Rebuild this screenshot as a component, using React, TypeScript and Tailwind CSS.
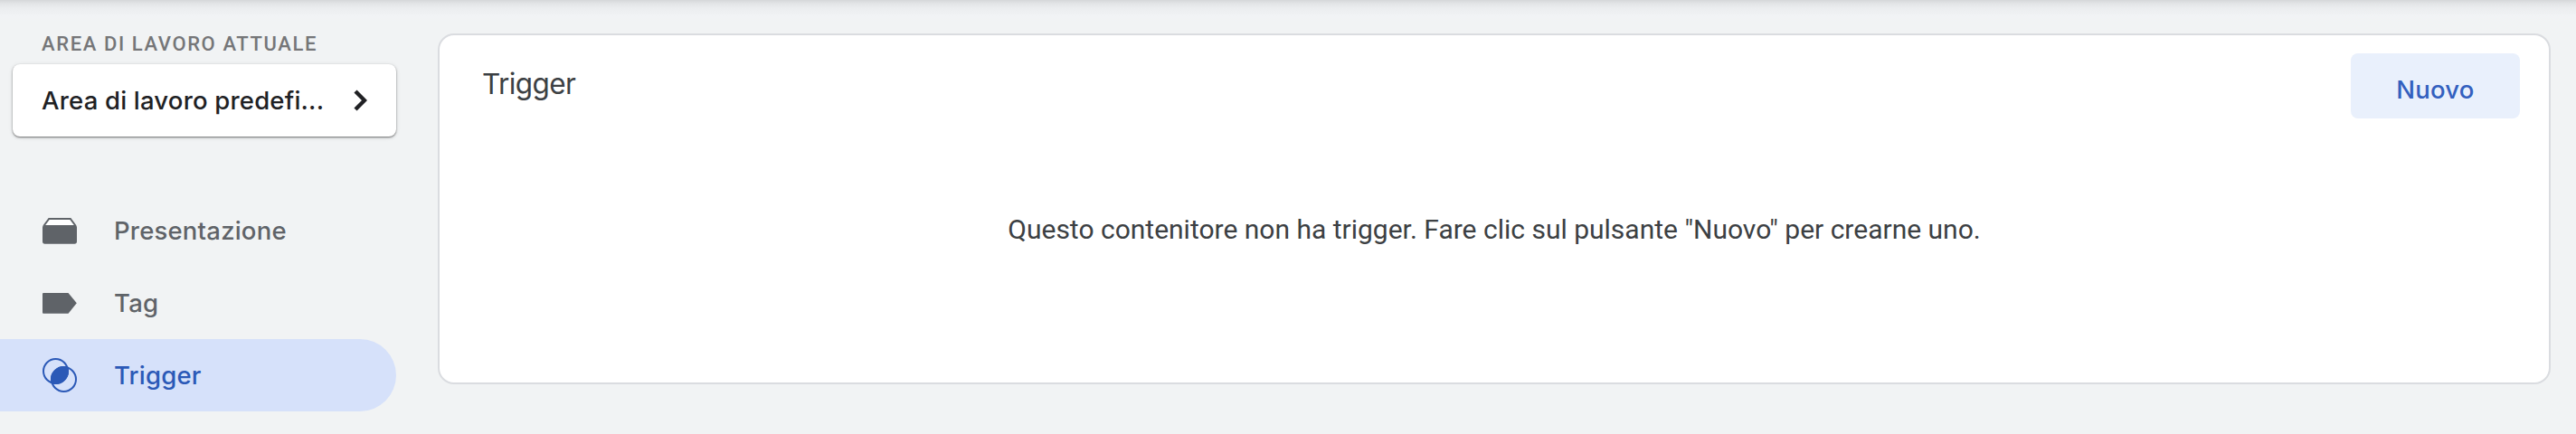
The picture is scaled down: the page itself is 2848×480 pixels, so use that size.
import type { ReactNode } from "react";

function ContainerIcon() {
  return (
    <svg width="38" height="29" viewBox="0 0 38 29" fill="none">
      <path d="M7.6 1.9H30.4L35 8.5H3Z" fill="#fff" />
      <path d="M1.2 9 7.2 1H30.8L36.8 9" stroke="currentColor" strokeWidth="2" />
      <rect y="8" width="38" height="20.7" rx="2.6" fill="currentColor" />
    </svg>
  );
}

function TagIcon() {
  return (
    <svg width="38" height="23" viewBox="0 0 38 23" fill="currentColor">
      <path d="M1 0H28.5L37.8 11.3 28.5 22.7H1Q0 22.7 0 21.7V1Q0 0 1 0Z" />
    </svg>
  );
}

function TriggerIcon() {
  return (
    <svg width="38" height="38" viewBox="0 0 38 38" fill="none">
      <circle cx="14.5" cy="14.5" r="13.5" stroke="currentColor" strokeWidth="2" />
      <circle cx="23.5" cy="23.5" r="13.5" stroke="currentColor" strokeWidth="2" />
      <path d="M28.2 9.8A14.5 14.5 0 0 1 9.8 28.2 14.5 14.5 0 0 1 28.2 9.8Z" fill="currentColor" />
    </svg>
  );
}

function NavItem({ icon, label, active = false }: { icon: ReactNode; label: string; active?: boolean }) {
  return (
    <a
      className={
        active
          ? "flex h-20 w-[438px] items-center rounded-r-full bg-[#d6e1fa] pl-[47px] text-[#2b59b7]"
          : "flex h-20 w-[438px] items-center pl-[47px] text-[#5f6368]"
      }
    >
      <span className="flex w-[79px] items-center">{icon}</span>
      <span className="font-['Inter',sans-serif] text-[27.5px] leading-9 font-medium tracking-[0.2px]">{label}</span>
    </a>
  );
}

export default function App() {
  return (
    <div className="flex h-[480px] w-[2848px] overflow-hidden bg-[#f1f3f4] bg-[linear-gradient(to_bottom,#d5d7d9_0px,#e3e5e7_4px,#ebedef_9px,#f1f3f5_18px,#f1f3f4_24px)] font-['Roboto',sans-serif]">
      <aside className="w-[484px] shrink-0">
        <h2 className="h-[71px] pt-[33px] pl-[46px] text-[22px] leading-[32px] font-medium tracking-[1.6px] text-[#757678]">
          AREA DI LAVORO ATTUALE
        </h2>
        <button className="ml-[14px] flex h-20 w-[424px] items-center justify-between rounded-lg bg-white pr-[32px] pl-8 shadow-[0_1px_2px_rgba(0,0,0,0.5),0_1px_5px_rgba(0,0,0,0.12)]">
          <span className="font-['Inter',sans-serif] text-[27.5px] leading-9 font-medium tracking-[0.2px] whitespace-nowrap text-[#202124]">
            Area di lavoro predefi...
          </span>
          <svg width="15" height="24" viewBox="0 0 15 24" fill="none">
            <path d="M2 2 12 12 2 22" stroke="#202124" strokeWidth="4.4" />
          </svg>
        </button>
        <nav className="mt-16">
          <NavItem icon={<ContainerIcon />} label="Presentazione" />
          <NavItem icon={<TagIcon />} label="Tag" />
          <NavItem icon={<TriggerIcon />} label="Trigger" active />
        </nav>
      </aside>
      <main className="mt-[37px] flex h-[388px] w-[2336px] flex-col rounded-[18px] border-2 border-[#dadce0] bg-white">
        <header className="flex h-[92px] items-start justify-between pr-8 pl-[47px]">
          <h1 className="pt-[34px] font-['Inter',sans-serif] text-[31.5px] leading-10 font-normal tracking-[-0.6px] text-[#3c4043]">
            Trigger
          </h1>
          <button className="mt-5 h-[72px] w-[187px] rounded-lg bg-[#e9f0fc] pt-[9px] font-['Inter',sans-serif] text-[27.5px] font-medium tracking-[0.2px] text-[#3360bf]">
            Nuovo
          </button>
        </header>
        <p className="mt-[103px] text-center text-[30px] leading-10 text-[#3c4043]">
          Questo contenitore non ha trigger. Fare clic sul pulsante "Nuovo" per crearne uno.
        </p>
      </main>
    </div>
  );
}
